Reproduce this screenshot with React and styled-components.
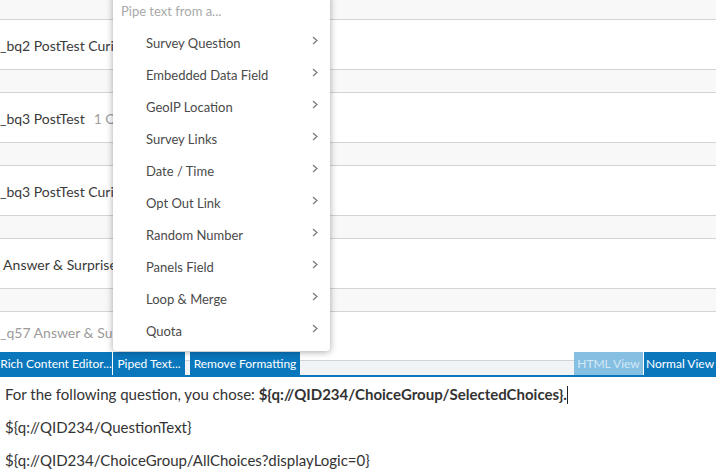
import styled, { createGlobalStyle } from "styled-components";

const GlobalStyle = createGlobalStyle`
  html, body {
    margin: 0;
    padding: 0;
    background: #fff;
    overflow: hidden;
  }
  body {
    font-family: Lato, "Open Sans", sans-serif;
  }
`;

const rows = [
  { text: "_bq2 PostTest Curiosity" },
  { text: "_bq3 PostTest", extra: "1 Question" },
  { text: "_bq3 PostTest Curiosity" },
  { text: " Answer & Surprise" },
  { text: "_q57 Answer & Surprise", muted: true },
];

const menuItems = [
  "Survey Question",
  "Embedded Data Field",
  "GeoIP Location",
  "Survey Links",
  "Date / Time",
  "Opt Out Link",
  "Random Number",
  "Panels Field",
  "Loop & Merge",
  "Quota",
];

function Chevron() {
  return (
    <ChevronIcon width="6" height="9" viewBox="0 0 6 9">
      <polyline points="1,1 5,4.5 1,8" fill="none" stroke="#777" strokeWidth="1.2" />
    </ChevronIcon>
  );
}

export default function App() {
  return (
    <Page>
      <GlobalStyle />
      <List>
        <Band $first />
        {rows.map((r, i) => (
          <div key={i}>
            <Row $last={i === rows.length - 1}>
              <RowText $muted={r.muted}>
                {r.text}
                {r.extra && <Extra>{r.extra}</Extra>}
              </RowText>
            </Row>
            {i < rows.length - 1 && <Band />}
          </div>
        ))}
      </List>

      <Menu>
        <Search>Pipe text from a...</Search>
        {menuItems.map((m) => (
          <Item key={m}>
            <span>{m}</span>
            <Chevron />
          </Item>
        ))}
      </Menu>

      <Toolbar>
        <ToolBtn $w={112}>Rich Content Editor...</ToolBtn>
        <Sep />
        <ToolBtn $w={72}>Piped Text...</ToolBtn>
        <Filler $w={5} />
        <ToolBtn $w={110}>Remove Formatting</ToolBtn>
        <Filler />
        <ToolBtn $w={69} $light>HTML View</ToolBtn>
        <Sep />
        <ToolBtn $w={72}>Normal View</ToolBtn>
      </Toolbar>

      <Editor>
        <Para>
          For the following question, you chose:{" "}
          <b>{"${q://QID234/ChoiceGroup/SelectedChoices}."}</b>
          <Caret />
        </Para>
        <Para>{"${q://QID234/QuestionText}"}</Para>
        <Para>{"${q://QID234/ChoiceGroup/AllChoices?displayLogic=0}"}</Para>
      </Editor>
    </Page>
  );
}

const Page = styled.div`
  position: relative;
  width: 716px;
  height: 474px;
  overflow: hidden;
  background: #fff;
`;

const List = styled.div`
  display: flex;
  flex-direction: column;
`;

const Band = styled.div`
  height: ${(p) => (p.$first ? 19 : 22)}px;
  background: #f8f8f8;
  border-bottom: 1px solid #d4d4d4;
`;

const Row = styled.div`
  height: ${(p) => (p.$last ? 40 : 49)}px;
  border-bottom: ${(p) => (p.$last ? "none" : "1px solid #d4d4d4")};
  display: flex;
  align-items: center;
  background: #fff;
`;

const RowText = styled.div`
  font-size: 14px;
  color: ${(p) => (p.$muted ? "#9b9b9b" : "#3a3a3a")};
  white-space: pre;
  padding-top: 1px;
`;

const Extra = styled.span`
  color: #a0a0a0;
  margin-left: 9px;
`;

const Menu = styled.div`
  position: absolute;
  top: -5px;
  left: 113px;
  width: 217px;
  padding-bottom: 4px;
  background: #fff;
  border-radius: 0 0 4px 4px;
  box-shadow: 0 1px 7px rgba(0, 0, 0, 0.35);
  z-index: 2;
`;

const Search = styled.div`
  height: 32px;
  display: flex;
  align-items: center;
  padding-left: 8px;
  font-size: 13px;
  color: #a9a9a9;
`;

const Item = styled.div`
  height: 32px;
  display: flex;
  align-items: center;
  justify-content: space-between;
  padding: 0 12px 0 33px;
  font-size: 13px;
  color: #4a4a4a;
`;

const ChevronIcon = styled.svg`
  margin-top: -6px;
`;

const Toolbar = styled.div`
  display: flex;
  align-items: flex-end;
  height: 23px;
  border-bottom: 2px solid #0a77bd;
`;

const ToolBtn = styled.div`
  width: ${(p) => p.$w}px;
  height: 23px;
  flex-shrink: 0;
  display: flex;
  align-items: center;
  justify-content: center;
  font-size: 12px;
  color: ${(p) => (p.$light ? "#d3e8f6" : "#fff")};
  background: ${(p) => (p.$light ? "#85bfe2" : "#0a77bd")};
  white-space: nowrap;
  overflow: hidden;
`;

const Sep = styled.div`
  width: 1px;
  height: 23px;
  background: #fff;
`;

const Filler = styled.div`
  ${(p) => (p.$w ? `width: ${p.$w}px;` : "flex: 1;")}
  height: 14px;
  background: #f1f4f7;
  border-top: 1px solid #d0d4d8;
`;

const Editor = styled.div`
  padding: 6px 5px 0;
  font-size: 15px;
  color: #333;
`;

const Para = styled.div`
  height: 33px;
  line-height: 22px;
  white-space: nowrap;
`;

const Caret = styled.span`
  display: inline-block;
  width: 1px;
  height: 18px;
  background: #222;
  vertical-align: -4px;
`;
